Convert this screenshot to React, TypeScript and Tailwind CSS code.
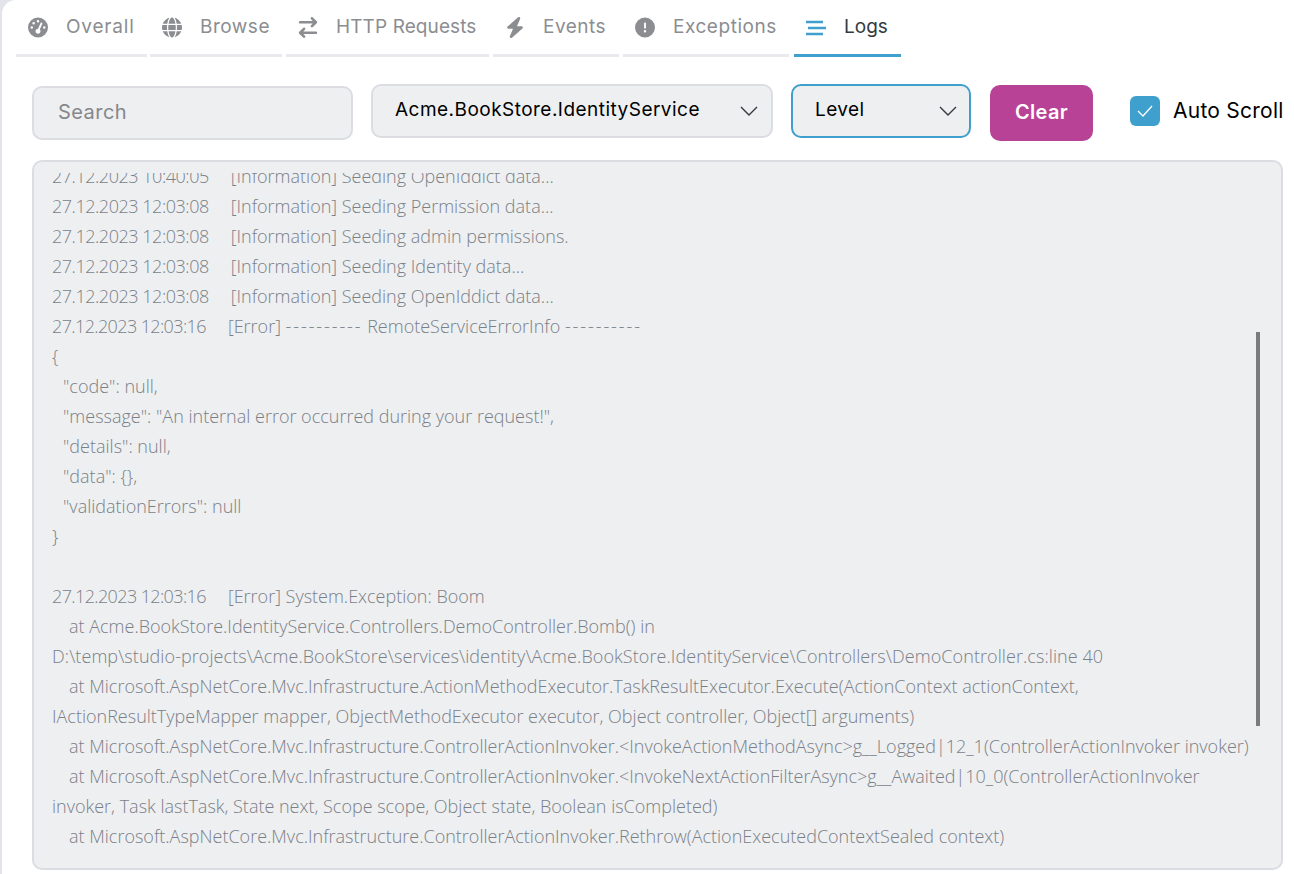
import { FaGaugeHigh, FaGlobe, FaArrowRightArrowLeft, FaBolt, FaCircleExclamation } from "react-icons/fa6";
import { ReactNode } from "react";

const uiFont = "font-['Inter','Noto_Sans',sans-serif]";

const LogsIcon = () => (
  <svg width="20" height="16" viewBox="0 0 20 16" fill="none" stroke="#3f9fcd" strokeWidth="2.4">
    <path d="M0 2h17M2 8h18M0 14h17" />
  </svg>
);

const Chevron = () => (
  <svg width="18" height="10" viewBox="0 0 18 10" fill="none" stroke="#343a40" strokeWidth="1.4">
    <path d="M1 1l8 8 8-8" />
  </svg>
);

const tabs: { label: string; icon: ReactNode; cls: string; text: string; active?: boolean }[] = [
  { label: "Overall", icon: <FaGaugeHigh size={21} />, cls: "w-[131px] mr-[3px]", text: "tracking-[0.8px]" },
  { label: "Browse", icon: <FaGlobe size={21} />, cls: "w-[132px] mr-[4px]", text: "tracking-[0.5px]" },
  { label: "HTTP Requests", icon: <FaArrowRightArrowLeft size={21} />, cls: "w-[203px] mr-[4px]", text: "tracking-[0.1px]" },
  { label: "Events", icon: <FaBolt size={21} />, cls: "w-[126px] mr-[4px]", text: "tracking-[0.5px]" },
  { label: "Exceptions", icon: <FaCircleExclamation size={21} />, cls: "w-[166px] mr-[5px]", text: "tracking-[0.55px]" },
  { label: "Logs", icon: <LogsIcon />, cls: "w-[107px]", text: "", active: true },
];

const logLines = [
  "27.12.2023 10:40:05    [Information] Seeding OpenIddict data...",
  "27.12.2023 12:03:08    [Information] Seeding Permission data...",
  "27.12.2023 12:03:08    [Information] Seeding admin permissions.",
  "27.12.2023 12:03:08    [Information] Seeding Identity data...",
  "27.12.2023 12:03:08    [Information] Seeding OpenIddict data...",
  "27.12.2023 12:03:16    [Error] ---------- RemoteServiceErrorInfo ----------",
  "{",
  '  "code": null,',
  '  "message": "An internal error occurred during your request!",',
  '  "details": null,',
  '  "data": {},',
  '  "validationErrors": null',
  "}",
  " ",
  "27.12.2023 12:03:16    [Error] System.Exception: Boom",
  "   at Acme.BookStore.IdentityService.Controllers.DemoController.Bomb() in",
  "D:\\temp\\studio-projects\\Acme.BookStore\\services\\identity\\Acme.BookStore.IdentityService\\Controllers\\DemoController.cs:line 40",
  "   at Microsoft.AspNetCore.Mvc.Infrastructure.ActionMethodExecutor.TaskResultExecutor.Execute(ActionContext actionContext,",
  "IActionResultTypeMapper mapper, ObjectMethodExecutor executor, Object controller, Object[] arguments)",
  "   at Microsoft.AspNetCore.Mvc.Infrastructure.ControllerActionInvoker.<InvokeActionMethodAsync>g__Logged|12_1(ControllerActionInvoker invoker)",
  "   at Microsoft.AspNetCore.Mvc.Infrastructure.ControllerActionInvoker.<InvokeNextActionFilterAsync>g__Awaited|10_0(ControllerActionInvoker",
  "invoker, Task lastTask, State next, Scope scope, Object state, Boolean isCompleted)",
  "   at Microsoft.AspNetCore.Mvc.Infrastructure.ControllerActionInvoker.Rethrow(ActionExecutedContextSealed context)",
];

const LogLine = ({ line }: { line: string }) => {
  const m = line.match(/^(\S+ \S+) {4}(.*)$/);
  if (!m) {
    const indent = line.match(/^ */)![0].length;
    return (
      <div
        className={`whitespace-pre h-[30px] ${indent === 3 ? "pl-[17px]" : indent === 2 ? "pl-[11px]" : ""} ${
          line.startsWith("D:") ? "tracking-[0.07px]" : ""
        }`}
      >
        {line.trim() || " "}
      </div>
    );
  }
  const isError = m[2].startsWith("[Error]");
  return (
    <div className="whitespace-pre h-[30px]">
      <span className={isError ? "tracking-[-0.62px]" : "tracking-[-0.47px]"}>{m[1]}</span>
      <span className={isError ? "ml-[22px]" : "ml-[22px]"}>
        {m[2].split(/(-{10})/).map((part, i) =>
          part === "----------" ? (
            <span key={i} className="tracking-[1.9px]">{part}</span>
          ) : (
            <span key={i}>{part}</span>
          )
        )}
      </span>
    </div>
  );
};

export default function App() {
  return (
    <div className="w-[1294px] h-[874px] overflow-hidden bg-[#e3e4e9]">
      <div className={`h-full ml-[2px] rounded-tl-[14px] bg-white pt-[4px] ${uiFont}`}>
        <div className="flex pl-[14px]">
          {tabs.map((t) => (
            <div
              key={t.label}
              className={`${t.cls} h-[53px] pb-[3px] pl-[12px] gap-[18px] flex items-center border-b-[3px] text-[19px] ${
                t.active ? "border-[#3f9fcd] text-[#343a40]" : "border-[#e9eaee] text-[#8b8d91]"
              }`}
            >
              <span className="w-[20px] flex justify-center shrink-0">{t.icon}</span>
              <span className={t.text}>{t.label}</span>
            </div>
          ))}
        </div>

        <div className="flex items-start pl-[30px] mt-[27px] h-[57px]">
          <div className="w-[321px] h-[54px] mt-[2px] pb-[2px] flex items-center rounded-[10px] border-2 border-[#dcdde3] bg-[#eeeff1] pl-[24px] text-[20px] tracking-[0.45px] text-[#85878b]">
            Search
          </div>
          <div className="ml-[18px] w-[402px] h-[54px] flex items-center justify-between rounded-[10px] border-2 border-[#dcdde3] bg-[#eeeff1] pl-[22px] pr-[13px] text-[19px] tracking-[0.47px] text-black">
            <span className="-mt-[2px]">Acme.BookStore.IdentityService</span>
            <Chevron />
          </div>
          <div className="ml-[18px] w-[180px] h-[54px] flex items-center justify-between rounded-[10px] border-2 border-[#3f9fcd] bg-[#eeeff1] pl-[22px] pr-[12px] text-[19px] tracking-[0.4px] text-black">
            <span className="-mt-[2px]">Level</span>
            <Chevron />
          </div>
          <button className="ml-[19px] mt-[1px] pb-[2px] w-[103px] h-[56px] rounded-[10px] bg-[#b84296] text-white text-[20px] tracking-[0.3px] font-semibold">
            Clear
          </button>
          <div className="ml-[37px] mt-[12px] w-[30px] h-[30px] rounded-[6px] bg-[#3f9fcd] flex items-center justify-center">
            <svg width="18" height="14" viewBox="0 0 18 14" fill="none" stroke="white" strokeWidth="1.3">
              <path d="M2 7l5 5 9-10" />
            </svg>
          </div>
          <span className="ml-[13px] mt-[11px] text-[21px] tracking-[0.25px] text-black whitespace-nowrap">Auto Scroll</span>
        </div>

        <div className="relative ml-[30px] mt-[19px] w-[1251px] h-[710px] rounded-[10px] border-2 border-[#dcdde3] bg-[#eeeff1] overflow-hidden pl-[18px] pt-[11px] font-['Open_Sans',sans-serif] font-light text-[#7a7f88] text-[18px] leading-[30px]">
          <div className="h-[679px] overflow-hidden">
            <div className="-mt-[12px]">
              {logLines.map((l, i) => (
                <LogLine key={i} line={l} />
              ))}
            </div>
          </div>
          <div className="absolute left-[1222px] top-[170px] w-[4px] h-[394px] bg-[#7b7b7b]" />
        </div>
      </div>
    </div>
  );
}
